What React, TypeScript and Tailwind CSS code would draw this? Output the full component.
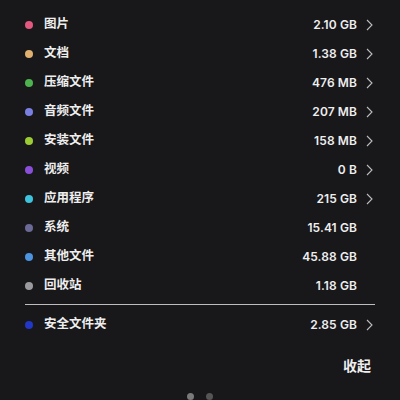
const rows = [
  { name: "图片", size: "2.10 GB", color: "bg-[#e4577f]", arrow: true },
  { name: "文档", size: "1.38 GB", color: "bg-[#dfb06f]", arrow: true },
  { name: "压缩文件", size: "476 MB", color: "bg-[#4db34f]", arrow: true },
  { name: "音频文件", size: "207 MB", color: "bg-[#7a7fe2]", arrow: true },
  { name: "安装文件", size: "158 MB", color: "bg-[#9ccc33]", arrow: true },
  { name: "视频", size: "0 B", color: "bg-[#8a4fd8]", arrow: true },
  { name: "应用程序", size: "215 GB", color: "bg-[#3ec3df]", arrow: true },
  { name: "系统", size: "15.41 GB", color: "bg-[#6b6996]", arrow: false },
  { name: "其他文件", size: "45.88 GB", color: "bg-[#4c93e0]", arrow: false },
  { name: "回收站", size: "1.18 GB", color: "bg-[#9b9a9f]", arrow: false },
];

function Chevron() {
  return (
    <svg width="7" height="12" viewBox="0 0 7 12" className="ml-[9px]">
      <polyline points="1,1 6,6 1,11" fill="none" stroke="#bdbdbd" strokeWidth="1.1" />
    </svg>
  );
}

function Row(props: any) {
  return (
    <div className="flex items-center h-[29px]">
      <div className={`w-[8px] h-[8px] rounded-full ${props.color}`} />
      <span className="ml-[11px] text-[12.5px] font-semibold text-[#eeeeee]">{props.name}</span>
      <div className="flex-1" />
      <span className="text-[12px] font-semibold text-[#eeeeee] tracking-[0.1px]">{props.size}</span>
      <div className="w-[18px] flex items-center">{props.arrow && <Chevron />}</div>
    </div>
  );
}

export default function App() {
  return (
    <div
      className="w-[400px] h-[400px] bg-[#18171a] overflow-hidden px-[25px] pt-[10px]"
      style={{ fontFamily: 'Inter, "Noto Sans CJK SC", sans-serif' }}
    >
      {rows.map((r) => (
        <Row key={r.name} {...r} />
      ))}
      <div className="h-[1px] bg-[#bdbdbd] mt-[4px] mb-[5px]" />
      <Row name="安全文件夹" size="2.85 GB" color="bg-[#2236c8]" arrow />
      <div className="flex justify-end mt-[17px] pr-[4px]">
        <span className="text-[14px] font-semibold text-[#eeeeee] leading-[20px]">收起</span>
      </div>
      <div className="flex justify-center gap-[12px] mt-[17px]">
        <div className="w-[7px] h-[7px] rounded-full bg-[#7a7a7a]" />
        <div className="w-[7px] h-[7px] rounded-full bg-[#555555]" />
      </div>
    </div>
  );
}
